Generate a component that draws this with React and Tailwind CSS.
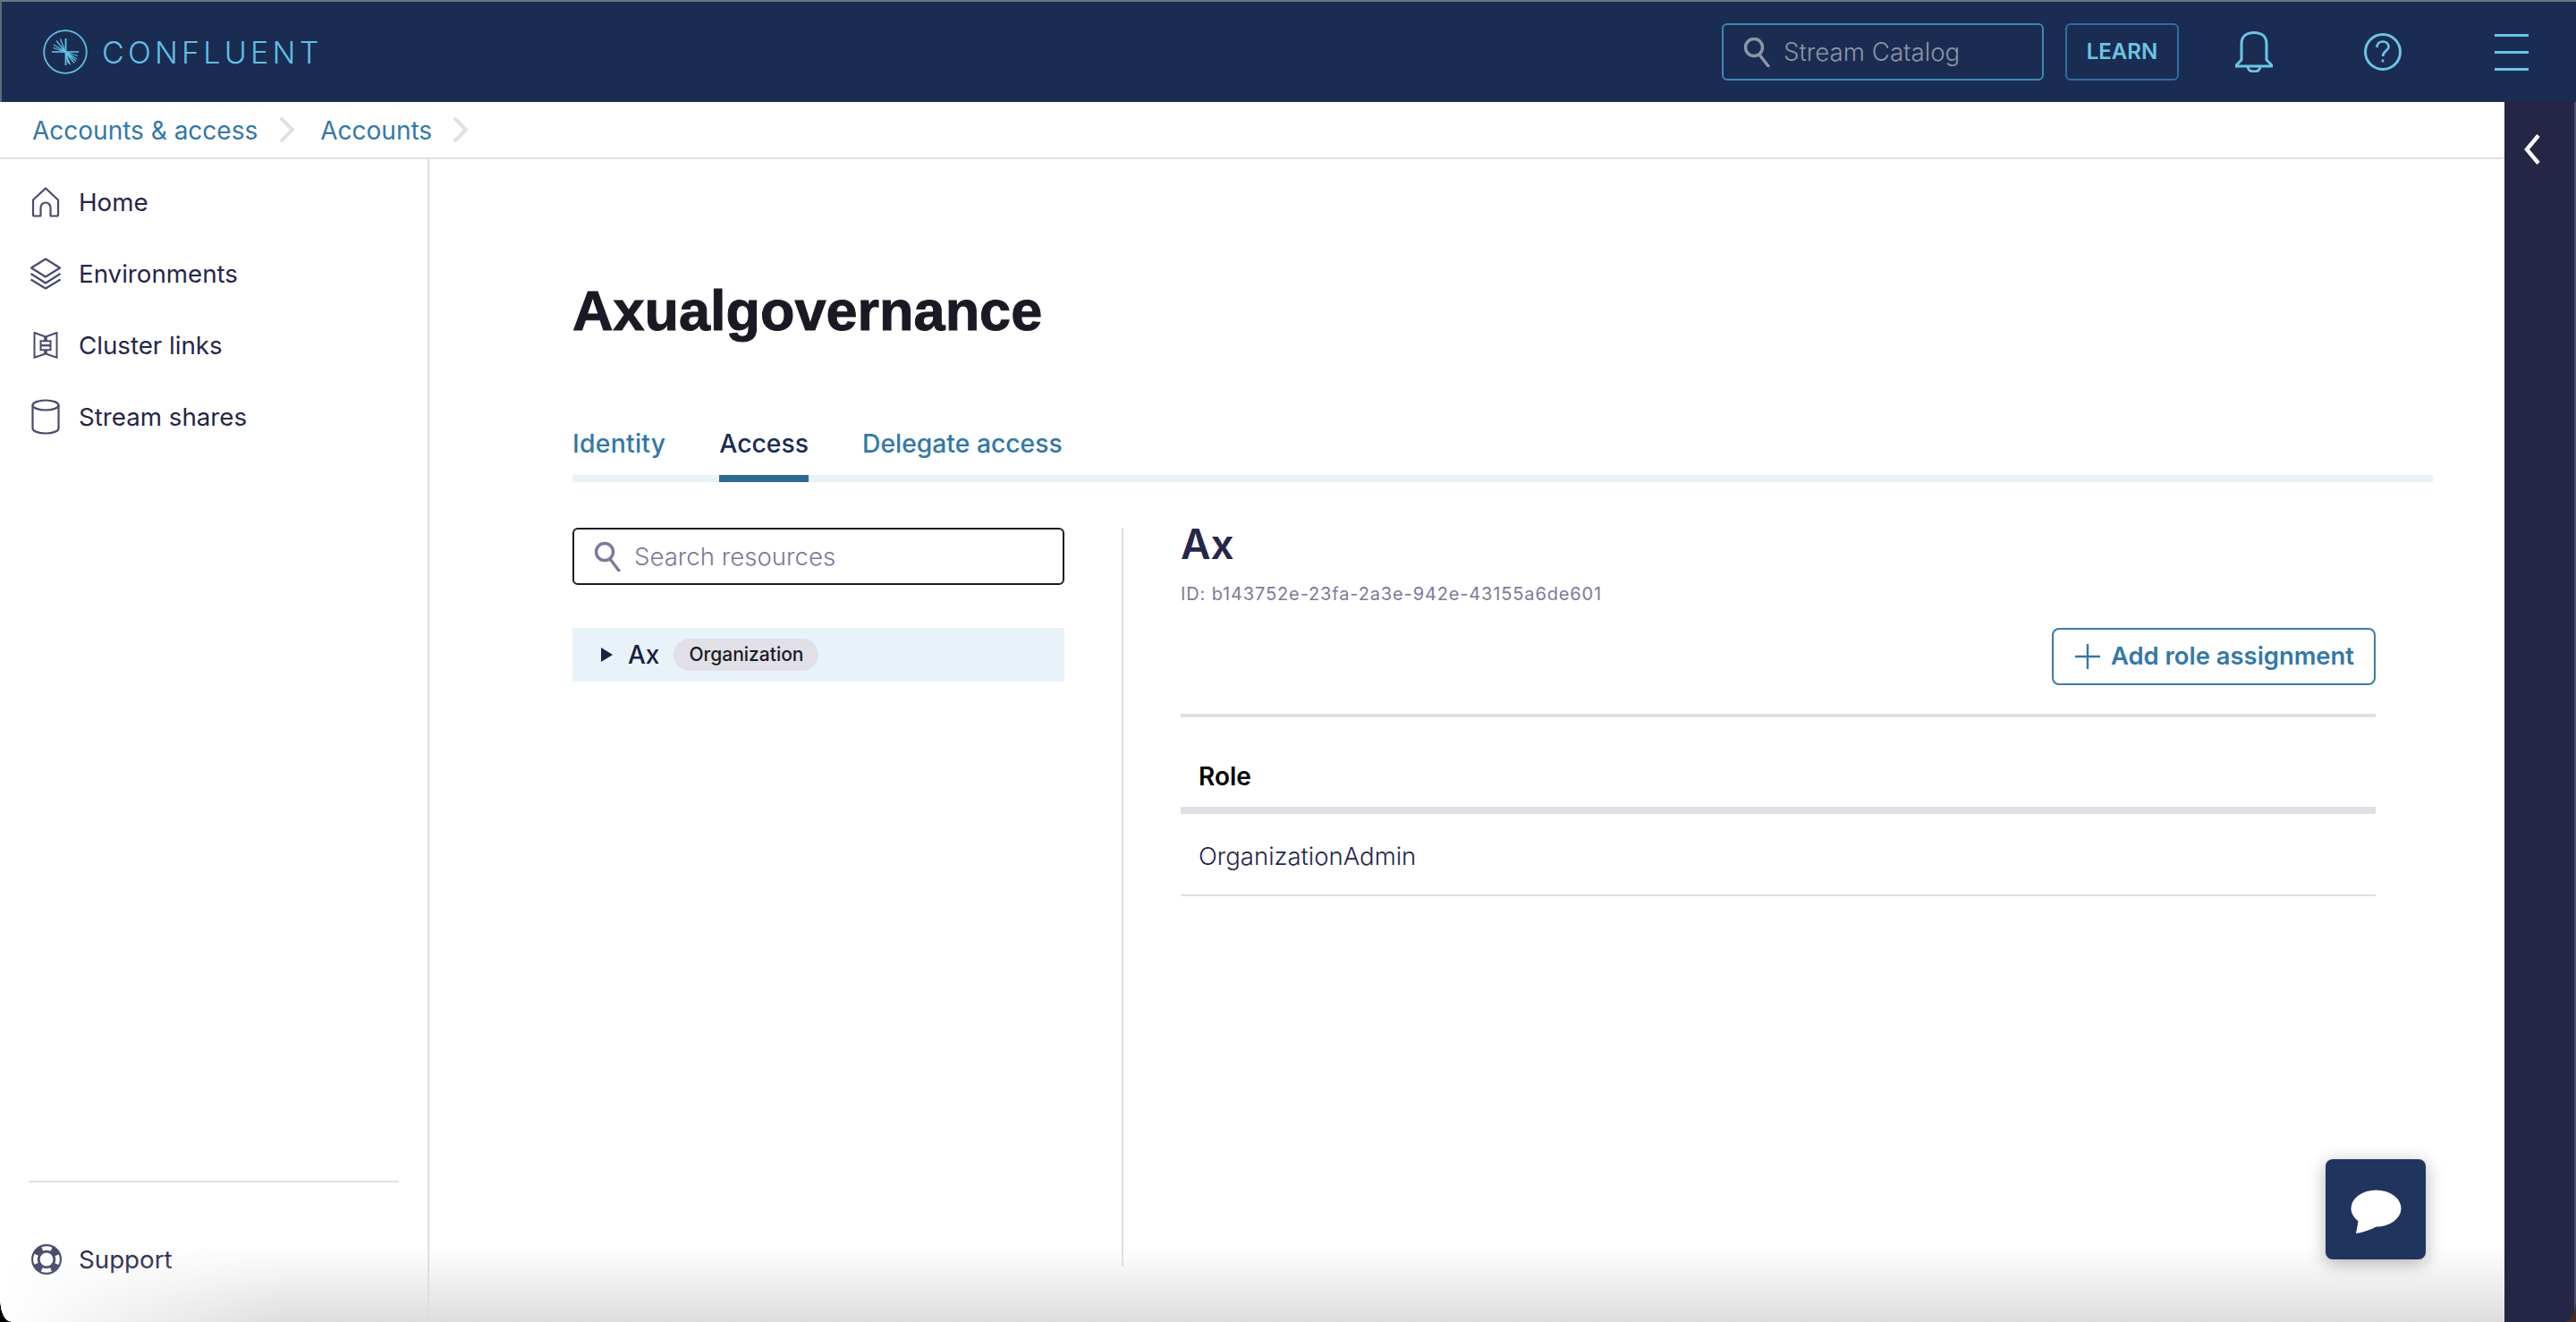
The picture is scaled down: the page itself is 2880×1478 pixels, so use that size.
import { ChevronRight } from "lucide-react";

const Logo = () => (
  <svg viewBox="0 0 50 50" className="h-[50px] w-[50px]" fill="none" stroke="#62bfe2">
    <circle cx="25" cy="25" r="23.8" strokeWidth="1.8" />
    <g strokeWidth="1.3">
      <path d="M25.5 10v30" strokeWidth="1.8" />
      <path d="M10 25h30" strokeWidth="1.6" />
      <path d="M25 25L15 12.5M25 25L12 17M25 25L11.5 20.5M25 25L19.5 10.5M25 25L35 37.5M25 25L38 33M25 25L39 29.5M25 25L30.5 39.5M25 25L28.5 38M25 25L37 35.5" />
    </g>
  </svg>
);

const SearchIcon = ({ color }) => (
  <svg viewBox="0 0 30 34" className="h-[34px] w-[30px]" fill="none" stroke={color} strokeWidth="3.4">
    <circle cx="12" cy="12" r="9.5" />
    <path d="M18 20L28 33" strokeLinecap="round" />
  </svg>
);

const HomeIcon = () => (
  <svg viewBox="0 0 32 34" className="h-[34px] w-[32px]" fill="none" stroke="#4a4b6d" strokeWidth="2.2" strokeLinejoin="round">
    <path d="M16 1.5L2 14.5V31a1.5 1.5 0 0 0 1.5 1.5H10.5V23a5.5 5.5 0 0 1 11 0v9.5H28.5A1.5 1.5 0 0 0 30 31V14.5z" />
  </svg>
);

const LayersIcon = () => (
  <svg viewBox="0 0 36 36" className="h-[36px] w-[36px]" fill="none" stroke="#4a4b6d" strokeWidth="2.2" strokeLinejoin="round">
    <path d="M18 1.5L34 11.5L18 21.5L2 11.5z" />
    <path d="M1.5 18L18 28.5L34.5 18" />
    <path d="M1.5 24.5L18 34.5L34.5 24.5" />
  </svg>
);

const ClusterIcon = () => (
  <svg viewBox="0 0 28 30" className="h-[30px] w-[28px]" fill="none" stroke="#4a4b6d" strokeWidth="2">
    <path d="M1.5 1L13.2 5.3V10.3H8.5V20.3H13.2V24.7L1.5 28.7z" />
    <path d="M26.5 1L14.8 5.3V10.3H19.5V20.3H14.8V24.7L26.5 28.7z" />
    <path d="M8.5 15.2H19.5" strokeWidth="2.4" />
  </svg>
);

const CylinderIcon = () => (
  <svg viewBox="0 0 32 40" className="h-[40px] w-[32px]" fill="none" stroke="#4a4b6d" strokeWidth="2.2">
    <ellipse cx="16" cy="7" rx="14.5" ry="5.5" />
    <path d="M1.5 7V33C1.5 36 8 38.5 16 38.5S30.5 36 30.5 33V7" />
  </svg>
);

const SupportIcon = () => (
  <svg viewBox="0 0 34 34" className="h-[34px] w-[34px]" fill="none">
    <circle cx="17" cy="17" r="17" fill="#4a4b6d" />
    <circle cx="17" cy="17" r="12.5" stroke="#fff" strokeWidth="4.6" strokeDasharray="10.5 9.13" strokeDashoffset="5.25" />
    <circle cx="17" cy="17" r="7.4" fill="#fff" />
  </svg>
);

const BellIcon = () => (
  <svg viewBox="0 0 42 46" className="h-[46px] w-[42px]" fill="none" stroke="#6cc5e4" strokeWidth="3">
    <path d="M7 32V14C7 6 12.5 1.5 21 1.5S35 6 35 14V32L40.5 37.5V39H1.5V37.5z" />
    <path d="M14 39C14 43 17 45 21 45S28 43 28 39" />
  </svg>
);

const HelpIcon = () => (
  <svg viewBox="0 0 42 42" className="h-[42px] w-[42px]" fill="none" stroke="#6cc5e4" strokeWidth="3">
    <circle cx="21" cy="21" r="19.5" />
    <path d="M14.5 16C14.5 12 17 9.5 21 9.5S27.5 12 27.5 15.5C27.5 19.5 21 20.5 21 26" strokeWidth="2.6" />
    <path d="M21 29.5V32.5" strokeWidth="2.6" />
  </svg>
);

const PlusIcon = () => (
  <svg viewBox="0 0 28 28" className="h-[28px] w-[28px]" stroke="#3378a8" strokeWidth="2.4">
    <path d="M14 0V28M0 14H28" />
  </svg>
);

const RailChevron = () => (
  <svg viewBox="0 0 18 34" className="h-[34px] w-[18px]" fill="none" stroke="#fff" strokeWidth="4.4">
    <path d="M16 1.5L3 17L16 32.5" />
  </svg>
);

const BubbleIcon = () => (
  <svg viewBox="0 0 58 50" className="h-[50px] w-[58px]" fill="#fff">
    <ellipse cx="29.5" cy="21" rx="28" ry="20.5" />
    <path d="M10 33L7 49C14 48 24 45 32 40z" />
  </svg>
);

const navItems = [
  { label: "Home", icon: <HomeIcon /> },
  { label: "Environments", icon: <LayersIcon /> },
  { label: "Cluster links", icon: <ClusterIcon /> },
  { label: "Stream shares", icon: <CylinderIcon /> },
];

const Header = () => (
  <header className="flex h-[114px] shrink-0 items-center border-t-2 border-l-2 border-t-[#6b7682] border-l-[#5d6a7d] bg-[#1a2c52] pr-[53px] pl-[46px]">
    <div className="flex items-center gap-[16px]">
      <Logo />
      <span className="text-[34px] font-light tracking-[0.125em] text-[#62bfe2]">CONFLUENT</span>
    </div>
    <div className="ml-auto flex items-center">
      <div className="flex h-[64px] w-[360px] items-center rounded-[6px] border-2 border-[#3f87b4] pl-[22px]">
        <SearchIcon color="#8d95a8" />
        <span className="ml-[15px] pt-[2px] text-[27.7px] font-light text-[#8d95a8]">Stream Catalog</span>
      </div>
      <div className="ml-[24px] flex h-[64px] w-[127px] items-center justify-center rounded-[6px] border-2 border-[#2f6f9f] text-[24px] font-semibold text-[#6cc5e4]">
        LEARN
      </div>
      <div className="ml-[63px]">
        <BellIcon />
      </div>
      <div className="ml-[102px]">
        <HelpIcon />
      </div>
      <div className="ml-[104px] flex h-[41px] w-[38px] flex-col justify-between">
        <div className="h-[3px] bg-[#6cc5e4]" />
        <div className="h-[3px] bg-[#6cc5e4]" />
        <div className="h-[3px] bg-[#6cc5e4]" />
      </div>
    </div>
  </header>
);

const Breadcrumb = () => (
  <div className="flex h-[64px] shrink-0 items-center border-b-2 border-[#e0e0e6] pl-[36px] text-[28px] text-[#3378a8]">
    <span className="pt-[1px]">Accounts &amp; access</span>
    <ChevronRight className="mr-[13px] ml-[9px] h-[48px] w-[48px] text-[#e0e0e6]" strokeWidth={2} />
    <span className="pt-[1px]">Accounts</span>
    <ChevronRight className="ml-[8px] h-[48px] w-[48px] text-[#e0e0e6]" strokeWidth={2} />
  </div>
);

const Sidebar = () => (
  <aside className="flex w-[480px] shrink-0 flex-col border-r-2 border-[#dedee5]">
    <nav className="flex flex-col pt-[8px]">
      {navItems.map((item) => (
        <div key={item.label} className="flex h-[80px] items-center pl-[32px]">
          <div className="flex w-[56px] justify-start">
            <div className="flex w-[38px] justify-center">{item.icon}</div>
          </div>
          <span className="pt-[1px] text-[27.7px] text-[#25264a]">{item.label}</span>
        </div>
      ))}
    </nav>
    <div className="mt-auto ml-[32px] w-[414px] border-t-2 border-[#e0e0e6]" />
    <div className="mt-[51px] mb-[35px] flex h-[70px] items-center pl-[35px]">
      <SupportIcon />
      <span className="ml-[19px] pt-[1px] text-[27.7px] text-[#25264a]">Support</span>
    </div>
  </aside>
);

const Tabs = () => (
  <div className="mt-[84px] flex h-[72px] gap-[60px] border-b-8 border-[#e8f2f9] text-[28.3px] font-medium">
    <div className="h-[72px] pt-[8px] tracking-[0.01em] text-[#3378a8]">Identity</div>
    <div className="h-[72px] border-b-8 border-[#2d6a94] pt-[8px] text-[#1a2c52]">Access</div>
    <div className="h-[72px] pt-[8px] text-[#3378a8]">Delegate access</div>
  </div>
);

const ResourceTree = () => (
  <div className="w-[550px] shrink-0">
    <div className="flex h-[64px] items-center rounded-[6px] border-2 border-[#1a1a26] pl-[22px]">
      <SearchIcon color="#7b7a9a" />
      <span className="ml-[15px] pt-[2px] text-[27.6px] font-light text-[#7b7a9a]">Search resources</span>
    </div>
    <div className="mt-[48px] flex h-[60px] items-center bg-[#e8f2f9] pl-[32px]">
      <div className="h-0 w-0 border-y-[8px] border-l-[13px] border-y-transparent border-l-[#1a2040]" />
      <span className="ml-[17px] text-[28px] font-medium text-[#1a2040]">Ax</span>
      <span className="ml-[16px] flex h-[36px] w-[162px] items-center justify-center rounded-full bg-[#e1e0e6] text-[21px] font-medium text-[#1a1a26]">
        Organization
      </span>
    </div>
  </div>
);

const RolePanel = () => (
  <div className="flex-1">
    <h2 className="-mt-[4px] text-[46px] leading-[44px] font-semibold text-[#25264a]">Ax</h2>
    <p className="mt-[22px] text-[20px] leading-[24px] tracking-[0.043em] text-[#7b7a9a]">
      ID: b143752e-23fa-2a3e-942e-43155a6de601
    </p>
    <div className="mt-[26px] flex justify-end">
      <button
        type="button"
        className="flex h-[64px] w-[362px] items-center rounded-[8px] border-2 border-[#3a7cab] pl-[24px] text-[27.4px] font-semibold text-[#3378a8]"
      >
        <PlusIcon />
        <span className="ml-[12px]">Add role assignment</span>
      </button>
    </div>
    <div className="mt-[32px] flex h-[112px] items-center border-t-4 border-b-8 border-[#dfdfe5] pt-[32px] pl-[20px] text-[28px] font-semibold text-[#000]">
      Role
    </div>
    <div className="flex h-[92px] items-center border-b-2 border-[#dfdfe5] pt-[6px] pl-[20px] text-[27.5px] font-light text-[#25264a]">
      OrganizationAdmin
    </div>
  </div>
);

export default function App() {
  return (
    <div className="relative flex h-screen flex-col overflow-hidden bg-white font-['Inter',sans-serif]">
      <Header />
      <div className="flex min-h-0 flex-1">
        <div className="flex min-w-0 flex-1 flex-col">
          <Breadcrumb />
          <div className="flex min-h-0 flex-1">
            <Sidebar />
            <main className="min-w-0 flex-1 pt-[133px] pr-[80px] pl-[160px]">
              <h1 className="font-['Liberation_Sans',sans-serif] text-[63px] leading-[72px] font-bold text-[#191a24] [-webkit-text-stroke:1px_#191a24]">
                Axualgovernance
              </h1>
              <Tabs />
              <div className="mt-[51px] flex pr-[64px]">
                <ResourceTree />
                <div className="mx-[64px] h-[825px] w-[2px] shrink-0 bg-[#dedee5]" />
                <RolePanel />
              </div>
            </main>
          </div>
        </div>
        <div className="w-[80px] shrink-0 border-r-2 border-[#4f5070] bg-[#252645] pt-[36px] pl-[22px]">
          <RailChevron />
        </div>
      </div>
      <div className="pointer-events-none absolute right-[80px] bottom-0 left-0 h-[85px] bg-gradient-to-t from-[#dedede] to-transparent [mask-image:linear-gradient(to_right,transparent,black_320px)]" />
      <div className="absolute bottom-0 left-0 h-[24px] w-[12px] bg-[radial-gradient(12px_24px_at_top_right,transparent_96%,#000)]" />
      <div className="absolute right-0 bottom-0 h-[24px] w-[12px] bg-[radial-gradient(12px_24px_at_top_left,transparent_96%,#4a2a22)]" />
      <button
        type="button"
        className="absolute top-[1296px] left-[2600px] flex h-[112px] w-[112px] items-center justify-center rounded-[8px] bg-[#1f355e] pt-[6px] shadow-[0_4px_20px_rgba(0,0,0,0.3)]"
      >
        <BubbleIcon />
      </button>
    </div>
  );
}
